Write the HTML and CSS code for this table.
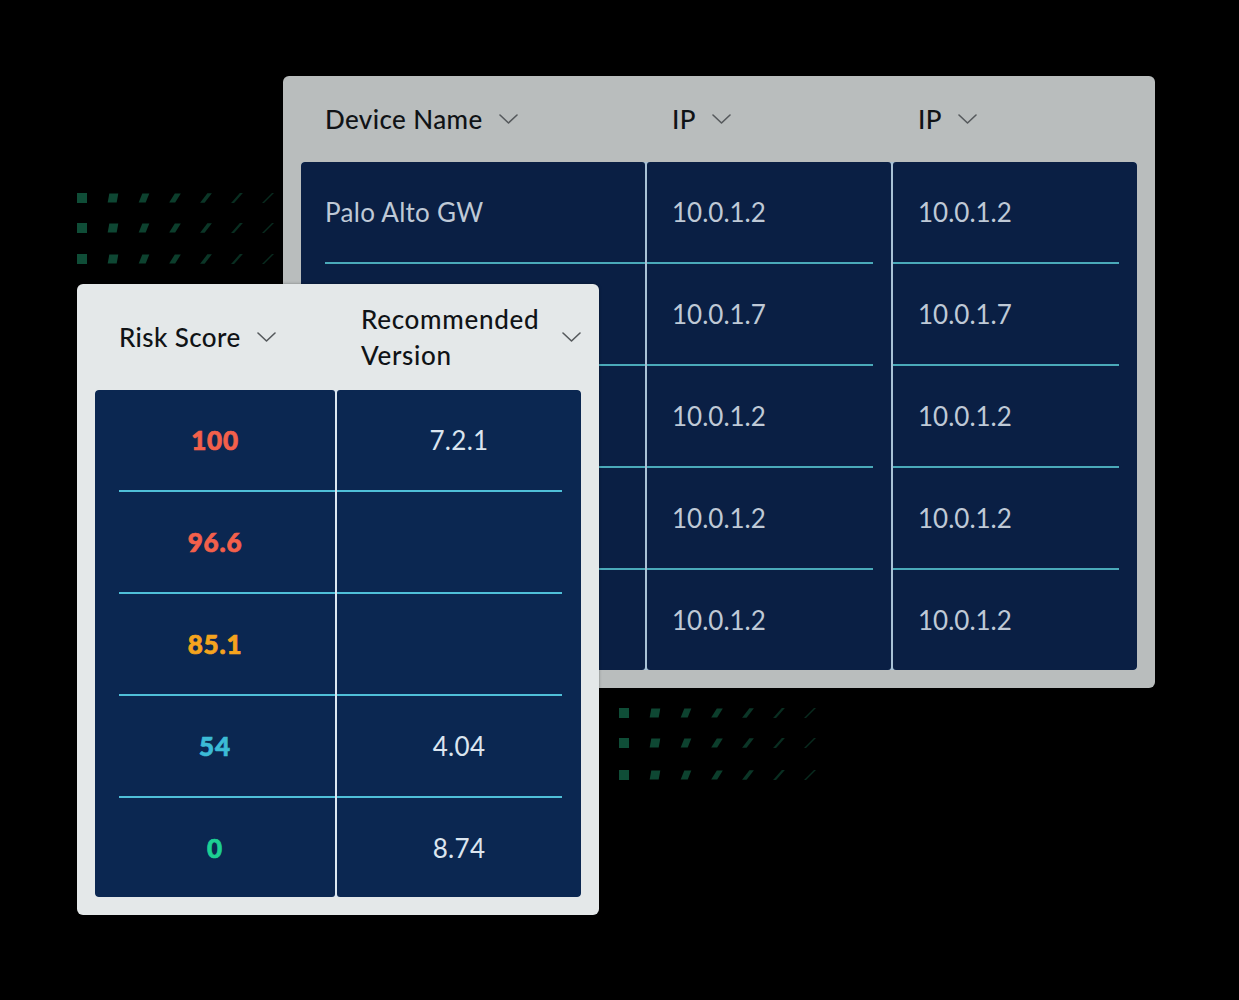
FILE: index.html
```html
<!DOCTYPE html>
<html lang="en">
<head>
<meta charset="utf-8">
<title>Devices</title>
<link rel="stylesheet" href="styles.css">
</head>
<body>
<div class="stage">
  <svg class="dots dots-a" width="220" height="90" viewBox="-8 -12 220 90" aria-hidden="true">
    <defs>
      <g id="dotrow" fill="#0f4d37">
        <polygon points="-5,-5 5,-5 5,5 -5,5"/>
        <polygon points="27.3,-4.5 36.3,-4.5 34.7,4.5 25.7,4.5" opacity="0.92"/>
        <polygon points="60.3,-4.5 67.3,-4.5 63.7,4.5 56.7,4.5" opacity="0.85"/>
        <polygon points="92.8,-4.5 98.8,-4.5 93.2,4.5 87.2,4.5" opacity="0.8"/>
        <polygon points="125.4,-4.8 129.9,-4.8 122.6,4.8 118.1,4.8" opacity="0.7"/>
        <polygon points="157.9,-5 160.9,-5 152.1,5 149.1,5" opacity="0.6"/>
        <polygon points="190,-5 192,-5 182,5 180,5" opacity="0.55"/>
      </g>
    </defs>
    <use href="#dotrow" x="0" y="0"/>
    <use href="#dotrow" x="0" y="30"/>
    <use href="#dotrow" x="0" y="61"/>
  </svg>

  <section class="panel back">
    <div class="head head-back">
      <div class="th">Device Name <svg class="chev" width="19" height="10" viewBox="0 0 19 10"><path d="M1 1 L9.5 9 L18 1"/></svg></div>
      <div class="th th-ip">IP <svg class="chev" width="19" height="10" viewBox="0 0 19 10"><path d="M1 1 L9.5 9 L18 1"/></svg></div>
      <div class="th th-ip">IP <svg class="chev" width="19" height="10" viewBox="0 0 19 10"><path d="M1 1 L9.5 9 L18 1"/></svg></div>
    </div>
    <div class="grid grid-back">
      <div class="col col-name">
        <div class="cell">Palo Alto GW</div>
        <div class="cell"></div>
        <div class="cell"></div>
        <div class="cell"></div>
        <div class="cell"></div>
      </div>
      <div class="col col-ip">
        <div class="cell">10.0.1.2</div>
        <div class="cell">10.0.1.7</div>
        <div class="cell">10.0.1.2</div>
        <div class="cell">10.0.1.2</div>
        <div class="cell">10.0.1.2</div>
      </div>
      <div class="col col-ip">
        <div class="cell">10.0.1.2</div>
        <div class="cell">10.0.1.7</div>
        <div class="cell">10.0.1.2</div>
        <div class="cell">10.0.1.2</div>
        <div class="cell">10.0.1.2</div>
      </div>
    </div>
  </section>

  <section class="panel front">
    <div class="head head-front">
      <div class="th">Risk Score <svg class="chev" width="19" height="10" viewBox="0 0 19 10"><path d="M1 1 L9.5 9 L18 1"/></svg></div>
      <div class="th th-rec"><span class="two-line">Recommended<br>Version</span> <svg class="chev" width="19" height="10" viewBox="0 0 19 10"><path d="M1 1 L9.5 9 L18 1"/></svg></div>
    </div>
    <div class="grid grid-front">
      <div class="col col-risk">
        <div class="cell score score-high">100</div>
        <div class="cell score score-high">96.6</div>
        <div class="cell score score-mid">85.1</div>
        <div class="cell score score-low">54</div>
        <div class="cell score score-none">0</div>
      </div>
      <div class="col col-ver">
        <div class="cell">7.2.1</div>
        <div class="cell"></div>
        <div class="cell"></div>
        <div class="cell">4.04</div>
        <div class="cell">8.74</div>
      </div>
    </div>
  </section>

  <svg class="dots dots-b" width="220" height="90" viewBox="-8 -12 220 90" aria-hidden="true">
    <use href="#dotrow" x="0" y="0"/>
    <use href="#dotrow" x="0" y="30"/>
    <use href="#dotrow" x="0" y="62"/>
  </svg>
</div>
</body>
</html>
```

FILE: styles.css
```css
* { box-sizing: border-box; }

html, body {
  margin: 0;
  padding: 0;
  background: #000;
}

body {
  font-family: "Lato", "Noto Sans", sans-serif;
  width: 1239px;
  height: 1000px;
  overflow: hidden;
}

.stage {
  position: relative;
  width: 1239px;
  height: 1000px;
  padding: 76px 0 0 283px;
}

.dots {
  position: absolute;
  display: block;
}
.dots-a { left: 74px; top: 186px; }
.dots-b { left: 616px; top: 701px; }

.panel {
  border-radius: 6px;
}

.back {
  position: relative;
  width: 872px;
  height: 612px;
  background: #b9bdbd;
  padding: 0 18px 18px 18px;
}

.front {
  position: absolute;
  left: 77px;
  top: 284px;
  width: 522px;
  height: 631px;
  background: #e4e8e9;
  padding: 0 18px 18px 18px;
  box-shadow: 0 0 3px rgba(0, 0, 0, 0.35);
}

.head {
  display: grid;
  column-gap: 2px;
  align-items: center;
  color: #101316;
  font-size: 26px;
  font-weight: 500;
  letter-spacing: 0.4px;
}
.head-back {
  grid-template-columns: 344px 244px 244px;
  height: 86px;
}
.head-front {
  grid-template-columns: 240px 244px;
  height: 106px;
}

.th {
  display: flex;
  align-items: center;
  gap: 16px;
  padding-left: 24px;
  line-height: 36px;
}
.th-ip { padding-left: 25px; }
.th-rec { gap: 14px; }
.two-line { display: block; width: 188px; white-space: nowrap; letter-spacing: 0.7px; }

.chev {
  display: block;
  flex: none;
}
.chev path {
  fill: none;
  stroke: #55595c;
  stroke-width: 1.6;
  stroke-linecap: round;
  stroke-linejoin: round;
}

.grid {
  display: grid;
  column-gap: 2px;
  border-radius: 4px;
  overflow: hidden;
}
.grid-back {
  grid-template-columns: 344px 244px 244px;
  height: 508px;
  background: #a9c2d6;
}
.grid-front {
  grid-template-columns: 240px 244px;
  height: 507px;
  background: #dbe7f1;
}

.col {
  display: flex;
  flex-direction: column;
  border-radius: 3px;
}
.grid-back .col { background: #0a1f44; }
.grid-front .col { background: #0b2751; }

.cell {
  height: 102px;
  flex: none;
  display: flex;
  align-items: center;
  font-size: 26px;
  letter-spacing: 0.3px;
}
.cell:last-child { flex: 1; height: auto; }

.grid-back .cell {
  color: #bfc9d6;
  border-bottom: 2px solid #4aa9b9;
}
.grid-back .cell:last-child { border-bottom: 0; }

.col-name .cell { margin-left: 24px; }
.col-ip .cell { margin-right: 18px; padding-left: 25px; letter-spacing: 0; }

.grid-front .cell {
  justify-content: center;
  color: #dbe5ef;
  border-bottom: 2px solid #4fbfd8;
}
.grid-front .cell:last-child { border-bottom: 0; }

.col-risk .cell { margin-left: 24px; padding-right: 24px; }
.col-ver .cell { margin-right: 19px; padding-left: 19px; }

.grid-front .score {
  font-weight: 900;
  font-size: 26px;
  letter-spacing: 0.8px;
  -webkit-text-stroke: 0.7px currentColor;
}
.grid-front .score-high { color: #f3604b; }
.grid-front .score-mid { color: #f5a41e; }
.grid-front .score-low { color: #3cbbd6; }
.grid-front .score-none { color: #1dcf93; }
```
